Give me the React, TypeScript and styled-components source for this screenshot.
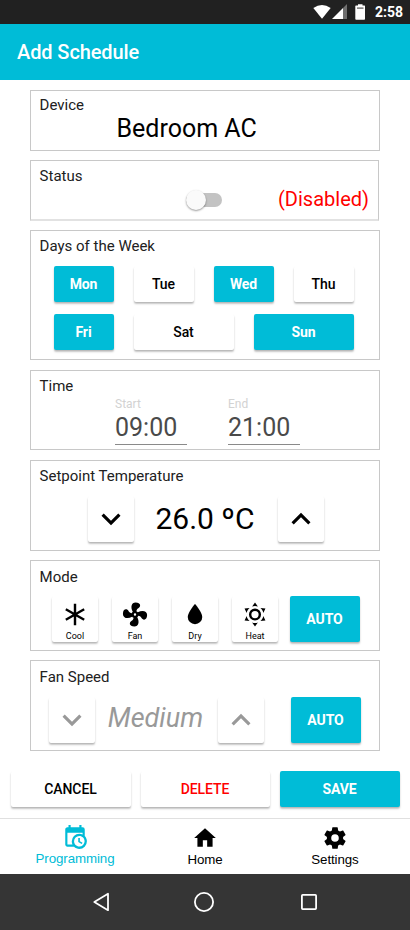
import React from "react";
import styled, { createGlobalStyle, css } from "styled-components";

const CYAN = "#00bcd7";

const GlobalStyle = createGlobalStyle`
  * { box-sizing: border-box; }
  body { margin: 0; background: #fff; font-family: Roboto, "Liberation Sans", sans-serif; color: #000; }
  button { font-family: inherit; border: 0; padding: 0; margin: 0; }
  svg { display: block; }
`;

const Screen = styled.div`
  width: 410px;
  height: 930px;
  display: flex;
  flex-direction: column;
  overflow: hidden;
  background: #fff;
`;

const StatusBar = styled.div`
  height: 24px;
  flex: none;
  background: #212121;
  display: flex;
  justify-content: flex-end;
  align-items: center;
  padding-right: 7px;
`;

const Clock = styled.span`
  width: 28px;
  margin-left: 9px;
  color: #fff;
  font-size: 14px;
  font-weight: 700;
  line-height: 24px;
  white-space: nowrap;
`;

const AppBar = styled.header`
  height: 56px;
  flex: none;
  background: ${CYAN};
  color: #fff;
  padding: 0 17px;
  font-size: 20px;
  font-weight: 500;
  letter-spacing: -0.1px;
  line-height: 56px;
`;

const Cards = styled.main`
  padding: 10px 30px 0;
  display: flex;
  flex-direction: column;
`;

const Card = styled.section<{ $h: number; $gap?: number; $inset?: number; $soft?: boolean }>`
  height: ${(p) => p.$h}px;
  margin-bottom: ${(p) => p.$gap ?? 10}px;
  margin-right: ${(p) => p.$inset ?? 0}px;
  border: 1px solid #c8c8c8;
  ${(p) => p.$soft && css`border-bottom: 2px solid #e2e2e2;`}
  display: flex;
  flex-direction: column;
`;

const CardTitle = styled.h2<{ $top?: number }>`
  margin: ${(p) => p.$top ?? 5}px 0 0 8.6px;
  font-size: 15px;
  font-weight: 400;
  line-height: 20px;
  height: 20px;
  color: #212121;
`;

const DeviceName = styled.div`
  margin: 0 0 0 85.5px;
  font-size: 25px;
  line-height: 28px;
`;

const StatusRow = styled.div`
  display: flex;
  align-items: center;
  height: 26px;
  padding: 0 9px 0 155px;
  justify-content: space-between;
`;

const Track = styled.div`
  width: 36px;
  height: 14px;
  margin-top: 2px;
  border-radius: 7px;
  background: #c3c3c3;
  display: flex;
  align-items: center;
`;

const Thumb = styled.div`
  width: 20px;
  height: 20px;
  flex: none;
  border-radius: 50%;
  background: #fafafa;
  box-shadow: 0 1px 2px rgba(0, 0, 0, 0.4);
`;

const StatusText = styled.span`
  color: #ff0000;
  font-size: 20px;
  line-height: 24px;
`;

const Button = styled.button<{ $w: number; $h?: number; $on?: boolean; $color?: string }>`
  width: ${(p) => p.$w}px;
  height: ${(p) => p.$h ?? 36}px;
  flex: none;
  display: flex;
  align-items: center;
  justify-content: center;
  border-radius: 2px;
  font-size: 14px;
  font-weight: ${(p) => (p.$on ? 700 : 500)};
  letter-spacing: -0.1px;
  color: ${(p) => (p.$on ? "#fff" : p.$color ?? "#000")};
  background: ${(p) => (p.$on ? CYAN : "#fff")};
  box-shadow: 0 2px 2px rgba(0, 0, 0, 0.22), 0 1px 1px rgba(0, 0, 0, 0.08);
`;

const TextButton = styled(Button)`
  padding-right: 1px;
`;

const Days = styled.div`
  width: 300px;
  margin: 10px 0 0 23px;
  display: flex;
  flex-wrap: wrap;
  gap: 12px 20px;
`;

const TimeFields = styled.div`
  display: flex;
  gap: 41px;
  padding-left: 84px;
`;

const TimeField = styled.label`
  width: 72px;
  height: 49px;
  border-bottom: 1px solid #8a8a8a;
  display: flex;
  flex-direction: column;
`;

const Hint = styled.span`
  font-size: 12px;
  line-height: 16px;
  color: #d2d2d2;
`;

const TimeValue = styled.span`
  font-size: 25px;
  line-height: 32px;
  color: #4a4a4a;
`;

const Controls = styled.div<{ $left: number; $top: number }>`
  display: flex;
  padding-left: ${(p) => p.$left}px;
  margin-top: ${(p) => p.$top}px;
`;

const Temperature = styled.div`
  width: 144px;
  padding-right: 2px;
  text-align: center;
  font-size: 30px;
  line-height: 46px;
`;

const Speed = styled.div`
  width: 123px;
  padding-right: 2px;
  text-align: center;
  font-size: 27px;
  font-style: italic;
  line-height: 42px;
  color: #999;
`;

const AutoSlot = styled.div<{ $left: number }>`
  margin-left: ${(p) => p.$left}px;
`;

const Modes = styled.div`
  display: flex;
  gap: 14px;
`;

const ModeButton = styled(Button)`
  flex-direction: column;
  justify-content: flex-start;
  padding-top: 4px;
  font-size: 9px;
  font-weight: 400;
  line-height: 11px;
  letter-spacing: 0;
`;

const ModeLabel = styled.span`
  margin-top: 2px;
`;

const Spacer = styled.div`
  flex: 1;
`;

const Actions = styled.div`
  display: flex;
  gap: 10px;
  padding: 10px 10px 11px 11px;
  height: 57px;
`;

const Tabs = styled.nav`
  height: 56px;
  flex: none;
  border-top: 1px solid #e0e0e0;
  display: flex;
  padding-left: 10px;
`;

const Tab = styled.a<{ $active?: boolean }>`
  width: 130px;
  display: flex;
  flex-direction: column;
  align-items: center;
  padding-top: ${(p) => (p.$active ? 5 : 6)}px;
  color: ${(p) => (p.$active ? CYAN : "#000")};
  font-family: "Liberation Sans", Arial, sans-serif;
  font-size: 13.33px;
  letter-spacing: -0.1px;
  line-height: 17px;
`;

const SystemBar = styled.div`
  height: 56px;
  flex: none;
  background: #353535;
  display: flex;
  align-items: center;
  padding-left: 92px;
  gap: 82px;
`;

function Icon({ d, size = 24 }: { d: string; size?: number }) {
  return (
    <svg width={size} height={size} viewBox="0 0 24 24" fill="currentColor">
      <path d={d} />
    </svg>
  );
}

const DOWN = "M7.41,8.58L12,13.17L16.59,8.58L18,10L12,16L6,10L7.41,8.58Z";
const UP = "M7.41,15.41L12,10.83L16.59,15.41L18,14L12,8L6,14L7.41,15.41Z";
const FAN =
  "M12,11A1,1 0 0,0 11,12A1,1 0 0,0 12,13A1,1 0 0,0 13,12A1,1 0 0,0 12,11M12.5,2C17,2 17.11,5.57 14.75,6.75C13.76,7.24 13.32,8.29 13.13,9.22C13.61,9.42 14.03,9.73 14.35,10.13C18.05,8.13 22.03,8.92 22.03,12.5C22.03,17 18.46,17.1 17.28,14.73C16.78,13.74 15.72,13.3 14.79,13.11C14.59,13.59 14.28,14 13.88,14.34C15.87,18.03 15.08,22 11.5,22C7,22 6.91,18.42 9.27,17.24C10.25,16.75 10.69,15.71 10.89,14.79C10.4,14.59 9.97,14.27 9.65,13.87C5.96,15.85 2,15.07 2,11.5C2,7 5.56,6.89 6.74,9.26C7.24,10.25 8.29,10.68 9.22,10.87C9.41,10.39 9.73,9.97 10.14,9.65C8.15,5.96 8.94,2 12.5,2Z";
const DROP = "M12,20A6,6 0 0,1 6,14C6,10 12,3.25 12,3.25C12,3.25 18,10 18,14A6,6 0 0,1 12,20Z";
const SUN =
  "M12,7A5,5 0 0,1 17,12A5,5 0 0,1 12,17A5,5 0 0,1 7,12A5,5 0 0,1 12,7M12,9A3,3 0 0,0 9,12A3,3 0 0,0 12,15A3,3 0 0,0 15,12A3,3 0 0,0 12,9M12,2L14.39,5.42C13.65,5.15 12.84,5 12,5C11.16,5 10.35,5.15 9.61,5.42L12,2M3.34,7L7.5,6.65C6.9,7.16 6.36,7.78 5.94,8.5C5.5,9.24 5.25,10 5.11,10.79L3.34,7M3.36,17L5.12,13.23C5.26,14 5.53,14.78 5.95,15.5C6.37,16.24 6.91,16.86 7.5,17.37L3.36,17M20.65,7L18.88,10.79C18.74,10 18.47,9.23 18.05,8.5C17.63,7.78 17.1,7.15 16.5,6.64L20.65,7M20.64,17L16.5,17.36C17.09,16.85 17.62,16.22 18.04,15.5C18.46,14.77 18.73,14 18.87,13.21L20.64,17M12,22L9.59,18.56C10.33,18.83 11.14,19 12,19C12.82,19 13.63,18.83 14.37,18.56L12,22Z";
const CALENDAR =
  "M15,13H16.5V15.82L18.94,17.23L18.19,18.53L15,16.69V13M19,8H5V19H9.67C9.24,18.09 9,17.07 9,16A7,7 0 0,1 16,9C17.07,9 18.09,9.24 19,9.67V8M5,21C3.89,21 3,20.1 3,19V5C3,3.89 3.89,3 5,3H6V1H8V3H16V1H18V3H19A2,2 0 0,1 21,5V11.1C22.24,12.36 23,14.09 23,16A7,7 0 0,1 16,23C14.09,23 12.36,22.24 11.1,21H5M16,11.15A4.85,4.85 0 0,0 11.15,16C11.15,18.68 13.32,20.85 16,20.85A4.85,4.85 0 0,0 20.85,16C20.85,13.32 18.68,11.15 16,11.15Z";
const HOME = "M10,20V14H14V20H19V12H22L12,3L2,12H5V20H10Z";
const COG =
  "M12,15.5A3.5,3.5 0 0,1 8.5,12A3.5,3.5 0 0,1 12,8.5A3.5,3.5 0 0,1 15.5,12A3.5,3.5 0 0,1 12,15.5M19.43,12.97C19.47,12.65 19.5,12.33 19.5,12C19.5,11.67 19.47,11.34 19.43,11L21.54,9.37C21.73,9.22 21.78,8.95 21.66,8.73L19.66,5.27C19.54,5.05 19.27,4.96 19.05,5.05L16.56,6.05C16.04,5.66 15.5,5.32 14.87,5.07L14.5,2.42C14.46,2.18 14.25,2 14,2H10C9.75,2 9.54,2.18 9.5,2.42L9.13,5.07C8.5,5.32 7.96,5.66 7.44,6.05L4.95,5.05C4.73,4.96 4.46,5.05 4.34,5.27L2.34,8.73C2.21,8.95 2.27,9.22 2.46,9.37L4.57,11C4.53,11.34 4.5,11.67 4.5,12C4.5,12.33 4.53,12.65 4.57,12.97L2.46,14.63C2.27,14.78 2.21,15.05 2.34,15.27L4.34,18.73C4.46,18.95 4.73,19.03 4.95,18.95L7.44,17.94C7.96,18.34 8.5,18.68 9.13,18.93L9.5,21.58C9.54,21.82 9.75,22 10,22H14C14.25,22 14.46,21.82 14.5,21.58L14.87,18.93C15.5,18.67 16.04,18.34 16.56,17.94L19.05,18.95C19.27,19.03 19.54,18.95 19.66,18.73L21.66,15.27C21.78,15.05 21.73,14.78 21.54,14.63L19.43,12.97Z";

const Asterisk = () => (
  <svg width="30" height="30" viewBox="0 0 30 30" stroke="#000" strokeWidth="2.5" fill="none">
    <path d="M15 4V26M5.5 9.5L24.5 20.5M5.5 20.5L24.5 9.5" />
  </svg>
);

const StatusIcons = () => (
  <svg width="53" height="18" viewBox="0 0 53 18" fill="#fff">
    <path d="M0.3 5Q9 -1 17.7 5L9 15.8Z" />
    <path d="M19 16L30 5V16Z" />
    <path d="M30 5L34 1V16H30Z" fill="#6f6f6f" />
    <path d="M45 1.2H49.5V2.5H51.5Q52 2.5 52 3V16Q52 16.8 51.2 16.8H43.2Q42.3 16.8 42.3 16V3Q42.3 2.5 43 2.5H45Z" />
    <path d="M44 4.500H50.500V5.700H44Z" fill="#555" />
  </svg>
);

const days: [string, number, boolean][] = [
  ["Mon", 60, true],
  ["Tue", 60, false],
  ["Wed", 60, true],
  ["Thu", 60, false],
  ["Fri", 60, true],
  ["Sat", 100, false],
  ["Sun", 100, true],
];

const modes: [string, React.ReactNode][] = [
  ["Cool", <Asterisk />],
  ["Fan", <Icon d={FAN} size={30} />],
  ["Dry", <Icon d={DROP} size={30} />],
  ["Heat", <Icon d={SUN} size={30} />],
];

export default function App() {
  return (
    <Screen>
      <GlobalStyle />
      <StatusBar>
        <StatusIcons />
        <Clock>2:58</Clock>
      </StatusBar>
      <AppBar>Add Schedule</AppBar>
      <Cards>
        <Card $h={61} $gap={9}>
          <CardTitle $top={4}>Device</CardTitle>
          <DeviceName>Bedroom AC</DeviceName>
        </Card>
        <Card $h={61} $gap={9} $inset={1} $soft>
          <CardTitle>Status</CardTitle>
          <StatusRow>
            <Track>
              <Thumb />
            </Track>
            <StatusText>(Disabled)</StatusText>
          </StatusRow>
        </Card>
        <Card $h={130}>
          <CardTitle>Days of the Week</CardTitle>
          <Days>
            {days.map(([name, w, on]) => (
              <TextButton key={name} $w={w} $on={on}>
                {name}
              </TextButton>
            ))}
          </Days>
        </Card>
        <Card $h={80}>
          <CardTitle>Time</CardTitle>
          <TimeFields>
            <TimeField>
              <Hint>Start</Hint>
              <TimeValue>09:00</TimeValue>
            </TimeField>
            <TimeField>
              <Hint>End</Hint>
              <TimeValue>21:00</TimeValue>
            </TimeField>
          </TimeFields>
        </Card>
        <Card $h={91} $gap={9}>
          <CardTitle>Setpoint Temperature</CardTitle>
          <Controls $left={57} $top={10}>
            <Button $w={46} $h={46}>
              <Icon d={DOWN} size={38} />
            </Button>
            <Temperature>26.0 ºC</Temperature>
            <Button $w={46} $h={46}>
              <Icon d={UP} size={38} />
            </Button>
          </Controls>
        </Card>
        <Card $h={91} $gap={9}>
          <CardTitle $top={6}>Mode</CardTitle>
          <Controls $left={21} $top={9}>
            <Modes>
              {modes.map(([name, icon]) => (
                <ModeButton key={name} $w={46} $h={46}>
                  {icon}
                  <ModeLabel>{name}</ModeLabel>
                </ModeButton>
              ))}
            </Modes>
            <AutoSlot $left={12}>
              <TextButton $w={70} $h={46} $on>
                AUTO
              </TextButton>
            </AutoSlot>
          </Controls>
        </Card>
        <Card $h={91} $gap={0}>
          <CardTitle $top={6}>Fan Speed</CardTitle>
          <Controls $left={18} $top={10}>
            <Button $w={46} $h={46} $color="#999">
              <Icon d={DOWN} size={38} />
            </Button>
            <Speed>Medium</Speed>
            <Button $w={46} $h={46} $color="#999">
              <Icon d={UP} size={38} />
            </Button>
            <AutoSlot $left={27}>
              <TextButton $w={70} $h={46} $on>
                AUTO
              </TextButton>
            </AutoSlot>
          </Controls>
        </Card>
      </Cards>
      <Spacer />
      <Actions>
        <TextButton $w={120}>CANCEL</TextButton>
        <TextButton $w={129} $color="#ff0000">
          DELETE
        </TextButton>
        <TextButton $w={120} $on>
          SAVE
        </TextButton>
      </Actions>
      <Tabs>
        <Tab $active>
          <Icon d={CALENDAR} size={26} />
          Programming
        </Tab>
        <Tab>
          <Icon d={HOME} size={26} />
          Home
        </Tab>
        <Tab>
          <Icon d={COG} size={26} />
          Settings
        </Tab>
      </Tabs>
      <SystemBar>
        <svg width="20" height="22" viewBox="0 0 20 22" fill="none" stroke="#fff" strokeWidth="1.8" strokeLinejoin="round">
          <path d="M16 2.800V19.200L2.300 11Z" />
        </svg>
        <svg width="20" height="22" viewBox="0 0 20 22" fill="none" stroke="#fff" strokeWidth="1.8">
          <circle cx="10" cy="11" r="9.1" />
        </svg>
        <svg width="24" height="22" viewBox="0 0 24 22" fill="none" stroke="#fff" strokeWidth="1.8">
          <rect x="5.9" y="3.900" width="14.200" height="14.200" rx="0.8" />
        </svg>
      </SystemBar>
    </Screen>
  );
}
